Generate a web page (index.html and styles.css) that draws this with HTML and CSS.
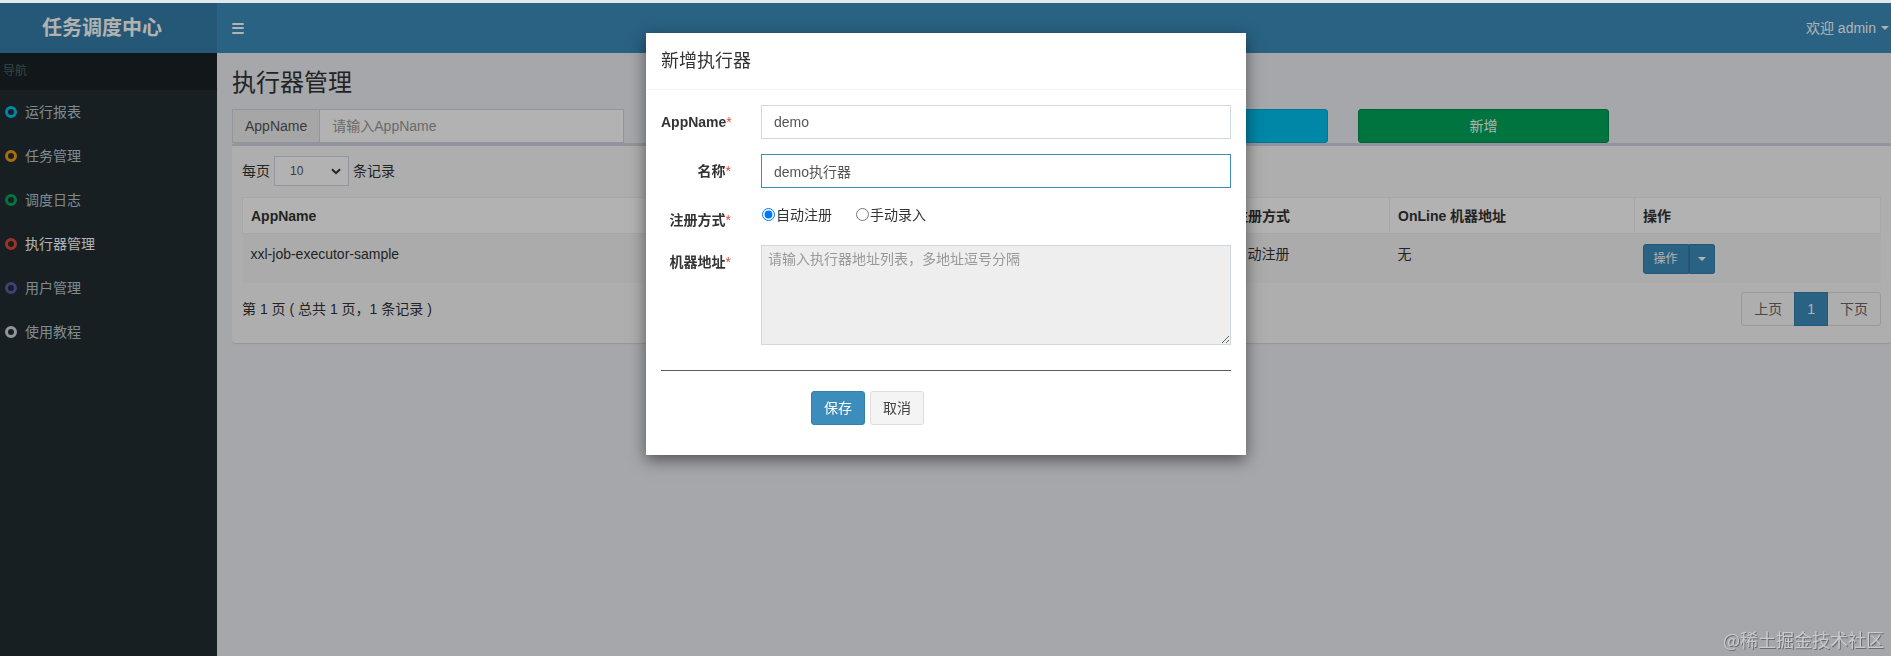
FILE: index.html
```html
<!DOCTYPE html>
<html lang="zh-CN">
<head>
<meta charset="utf-8">
<title>执行器管理</title>
<link rel="stylesheet" href="styles.css">
</head>
<body>
<div class="topstrip"></div>
<header class="main-header">
  <div class="logo">任务调度中心</div>
  <nav class="navbar">
    <span class="toggle"><i></i><i></i><i></i></span>
    <span class="user">欢迎 admin<span class="caret"></span></span>
  </nav>
</header>
<div class="wrap">
  <aside class="sidebar">
    <div class="nav-header">导航</div>
    <ul class="menu">
      <li><span class="ring aqua"></span>运行报表</li>
      <li><span class="ring yellow"></span>任务管理</li>
      <li><span class="ring green"></span>调度日志</li>
      <li class="active"><span class="ring red"></span>执行器管理</li>
      <li><span class="ring purple"></span>用户管理</li>
      <li><span class="ring gray"></span>使用教程</li>
    </ul>
  </aside>
  <main class="content">
    <h1 class="page-title">执行器管理</h1>
    <div class="filters">
      <div class="input-group"><span class="addon">AppName</span><input class="ig-input" type="text" placeholder="请输入AppName"></div>
      <div class="input-group"><span class="addon">名称</span><input class="ig-input" type="text" placeholder="请输入名称"></div>
      <button class="btn btn-info">搜索</button>
      <button class="btn btn-success">新增</button>
    </div>
    <div class="box">
      <div class="length">每页 <span class="select">10<svg class="chev" viewBox="0 0 10 7" width="10" height="7"><path d="M1 1.2 L5 5.2 L9 1.2" fill="none" stroke="#333" stroke-width="2"/></svg></span> 条记录</div>
      <table class="grid">
        <colgroup><col style="width:493px"><col style="width:490px"><col style="width:164px"><col style="width:245px"><col></colgroup>
        <thead>
          <tr><th>AppName</th><th>名称</th><th>注册方式</th><th>OnLine 机器地址</th><th>操作</th></tr>
        </thead>
        <tbody>
          <tr>
            <td>xxl-job-executor-sample</td>
            <td>示例执行器</td>
            <td>自动注册</td>
            <td>无</td>
            <td><span class="btn-group"><span class="op">操作</span><span class="op-toggle"><span class="caret"></span></span></span></td>
          </tr>
        </tbody>
      </table>
      <div class="pager-row">
        <span class="info">第 1 页 ( 总共 1 页，1 条记录 )</span>
        <span class="pagination"><span class="pg first">上页</span><span class="pg active">1</span><span class="pg last">下页</span></span>
      </div>
    </div>
  </main>
</div>

<div class="backdrop"></div>

<div class="modal">
  <div class="modal-header"><h4 class="modal-title">新增执行器</h4></div>
  <div class="modal-body">
    <div class="form-group">
      <label class="control-label">AppName<span class="req">*</span></label>
      <div class="control"><input class="form-control" type="text" value="demo"></div>
    </div>
    <div class="form-group">
      <label class="control-label">名称<span class="req">*</span></label>
      <div class="control"><input class="form-control focus" type="text" value="demo执行器"></div>
    </div>
    <div class="form-group">
      <label class="control-label">注册方式<span class="req">*</span></label>
      <div class="control radios">
        <label class="radio-inline"><input type="radio" name="addressType" checked>自动注册</label>
        <label class="radio-inline second"><input type="radio" name="addressType">手动录入</label>
      </div>
    </div>
    <div class="form-group">
      <label class="control-label">机器地址<span class="req">*</span></label>
      <div class="control"><textarea class="form-control area" placeholder="请输入执行器地址列表，多地址逗号分隔"></textarea></div>
    </div>
    <hr class="divider">
    <div class="form-actions">
      <button class="btn btn-primary">保存</button>
      <button class="btn btn-default">取消</button>
    </div>
  </div>
</div>

<div class="watermark">@稀土掘金技术社区</div>
</body>
</html>
```
FILE: styles.css
```css
* { box-sizing: border-box; }
html, body { margin: 0; padding: 0; }
body {
  width: 1891px;
  height: 656px;
  overflow: hidden;
  position: relative;
  background: #ecf0f5;
  font-family: "Liberation Sans", "Noto Sans CJK SC", sans-serif;
  font-size: 14px;
  line-height: 20px;
  color: #333;
}
input, textarea, button { font-family: inherit; }

.topstrip { height: 3px; background: #e3e8ec; }

/* header */
.main-header { display: flex; height: 50px; }
.logo {
  width: 217px;
  flex: none;
  background: #367fa9;
  color: #fff;
  font-size: 20px;
  font-weight: bold;
  line-height: 50px;
  text-align: center;
  padding-right: 13px;
}
.navbar {
  flex: 1;
  background: #3c8dbc;
  display: flex;
  align-items: center;
  justify-content: space-between;
  padding-left: 15px;
}
.toggle { display: flex; flex-direction: column; gap: 2.5px; width: 12px; }
.toggle i { display: block; height: 2px; background: #fff; border-radius: 1px; }
.user { color: #fff; font-size: 14px; display: flex; align-items: center; padding-right: 2px; }
.caret {
  display: inline-block;
  width: 0; height: 0;
  border-top: 4px solid currentColor;
  border-left: 4px solid transparent;
  border-right: 4px solid transparent;
}
.user .caret { margin-left: 5px; }

/* layout */
.wrap { display: flex; height: 603px; }
.sidebar { width: 217px; flex: none; background: #222d32; }
.nav-header {
  background: #1a2226;
  color: #4b646f;
  font-size: 12px;
  height: 37px;
  line-height: 36px;
  padding-left: 3px;
}
.menu { list-style: none; margin: 0; padding: 0; }
.menu li {
  height: 44px;
  display: flex;
  align-items: center;
  padding-left: 5px;
  color: #b8c7ce;
  font-size: 14px;
}
.menu li.active { color: #fff; }
.ring {
  width: 12px; height: 12px;
  border: 3px solid;
  border-radius: 50%;
  margin-right: 8px;
  flex: none;
}
.ring.aqua { border-color: #00c0ef; }
.ring.yellow { border-color: #f39c12; }
.ring.green { border-color: #00a65a; }
.ring.red { border-color: #dd4b39; }
.ring.purple { border-color: #605ca8; }
.ring.gray { border-color: #d2d6de; }

.content { flex: 1; padding: 17px 0 0 15px; }
.page-title { margin: 0; font-size: 24px; font-weight: normal; line-height: 26px; color: #333; }

.filters {
  display: grid;
  grid-template-columns: 392px 392px 252px 251px;
  column-gap: 30px;
  margin-top: 13px;
  height: 34px;
}
.input-group { display: flex; height: 34px; }
.addon {
  padding: 6px 12px;
  background: #eee;
  border: 1px solid #d2d6de;
  color: #555;
  line-height: 20px;
}
.ig-input {
  flex: 1;
  min-width: 0;
  border: 1px solid #d2d6de;
  border-left: 0;
  padding: 6px 12px;
  font-size: 14px;
  color: #555;
  background: #fff;
  outline: none;
}
.ig-input::placeholder { color: #999; }

.btn {
  display: inline-block;
  height: 34px;
  padding: 6px 12px;
  font-size: 14px;
  line-height: 20px;
  border: 1px solid transparent;
  border-radius: 3px;
  color: #fff;
}
.btn-info { background: #00c0ef; border-color: #00acd6; }
.btn-success { background: #00a65a; border-color: #008d4c; }
.btn-primary { background: #3c8dbc; border-color: #367fa9; }
.btn-default { background: #f4f4f4; border-color: #ddd; color: #444; }

/* box */
.box {
  background: #fafafa;
  border-top: 3px solid #d2d6de;
  border-radius: 3px;
  box-shadow: 0 1px 1px rgba(0,0,0,.1);
  padding: 10px 10px 10px;
}
.length { display: flex; align-items: center; height: 30px; gap: 4px; }
.select {
  position: relative;
  display: inline-flex;
  align-items: center;
  width: 75px;
  height: 30px;
  border: 1px solid #d2d6de;
  background: #fff;
  padding-left: 15px;
  font-size: 12px;
  color: #555;
}
.chev { position: absolute; right: 7px; top: 11px; }

.grid {
  width: 100%;
  border-collapse: collapse;
  margin-top: 11px;
  table-layout: fixed;
}
.grid th {
  text-align: left;
  font-weight: bold;
  padding: 8px 8px 7px;
  line-height: 20px;
  background: #fff;
  border: 1px solid #f0f0f0;
  white-space: nowrap;
}
.grid td {
  padding: 10px 8px 9px;
  line-height: 20px;
  background: #f5f5f5;
  vertical-align: top;
  white-space: nowrap;
}
.btn-group { display: inline-flex; height: 30px; }
.op, .op-toggle {
  background: #3c8dbc;
  border: 1px solid #367fa9;
  color: #fff;
  font-size: 12px;
  line-height: 18px;
  padding: 5px 10px;
}
.op { border-radius: 3px 0 0 3px; }
.op-toggle {
  border-left-color: #2f7aa6;
  padding: 5px 8px;
  border-radius: 0 3px 3px 0;
  display: inline-flex;
  align-items: center;
}
.pager-row {
  display: flex;
  justify-content: space-between;
  align-items: center;
  margin-top: 9px;
  margin-bottom: 7px;
  height: 34px;
}
.info { color: #333; }
.pagination { display: flex; }
.pg {
  padding: 6px 12px;
  line-height: 20px;
  border: 1px solid #ddd;
  background: #fafafa;
  color: #666;
  margin-left: -1px;
}
.pg.first { border-radius: 3px 0 0 3px; margin-left: 0; }
.pg.last { border-radius: 0 3px 3px 0; }
.pg.active { background: #3c8dbc; border-color: #367fa9; color: #fff; position: relative; }

/* modal */
.backdrop {
  position: fixed;
  top: 3px; left: 0; right: 0; bottom: 0;
  background: rgba(0,0,0,.3);
  z-index: 1040;
}
.modal {
  position: absolute;
  top: 33px;
  left: 646px;
  width: 600px;
  background: #fff;
  box-shadow: 0 5px 15px rgba(0,0,0,.5);
  z-index: 1050;
}
.modal-header { padding: 15px; border-bottom: 1px solid #f4f4f4; }
.modal-title { margin: 0; font-size: 18px; font-weight: normal; line-height: 26px; color: #333; }
.modal-body { padding: 15px; }
.form-group { display: flex; margin: 0 -15px 15px; }
.control-label {
  width: 100px;
  flex: none;
  padding: 7px 15px 0;
  text-align: right;
  font-weight: bold;
  line-height: 20px;
  white-space: nowrap;
}
.req { color: #dd4b39; font-weight: normal; }
.control { width: 500px; padding: 0 15px; }
.form-control {
  display: block;
  width: 100%;
  height: 34px;
  padding: 6px 12px;
  font-size: 14px;
  line-height: 20px;
  color: #555;
  border: 1px solid #d2d6de;
  background: #fff;
  outline: none;
}
.form-control.focus { border-color: #3c8dbc; }
.form-control::placeholder { color: #999; }
.area {
  height: 100px;
  background: #eee;
  padding: 4px 6px;
  line-height: 18px;
  resize: vertical;
}
.radios { padding-top: 1px; display: flex; align-items: center; height: 22px; }
.radio-inline { display: inline-flex; align-items: center; line-height: 20px; }
.radio-inline input { width: 13px; height: 13px; margin: 0 1px 0 1px; }
.radio-inline.second { margin-left: 23px; }
.divider { border: 0; border-top: 1px solid #5a5a5a; height: 0; margin: 25px 0 20px; }
.form-actions { padding-left: 150px; display: flex; gap: 5px; margin-bottom: 15px; }

.watermark {
  position: absolute;
  right: 7px;
  bottom: 5px;
  z-index: 1060;
  font-family: "Noto Sans CJK SC", sans-serif;
  font-size: 18px;
  line-height: 24px;
  color: #c9cbcd;
  text-shadow: 1px 1px 0 #6a6d70;
}
```
